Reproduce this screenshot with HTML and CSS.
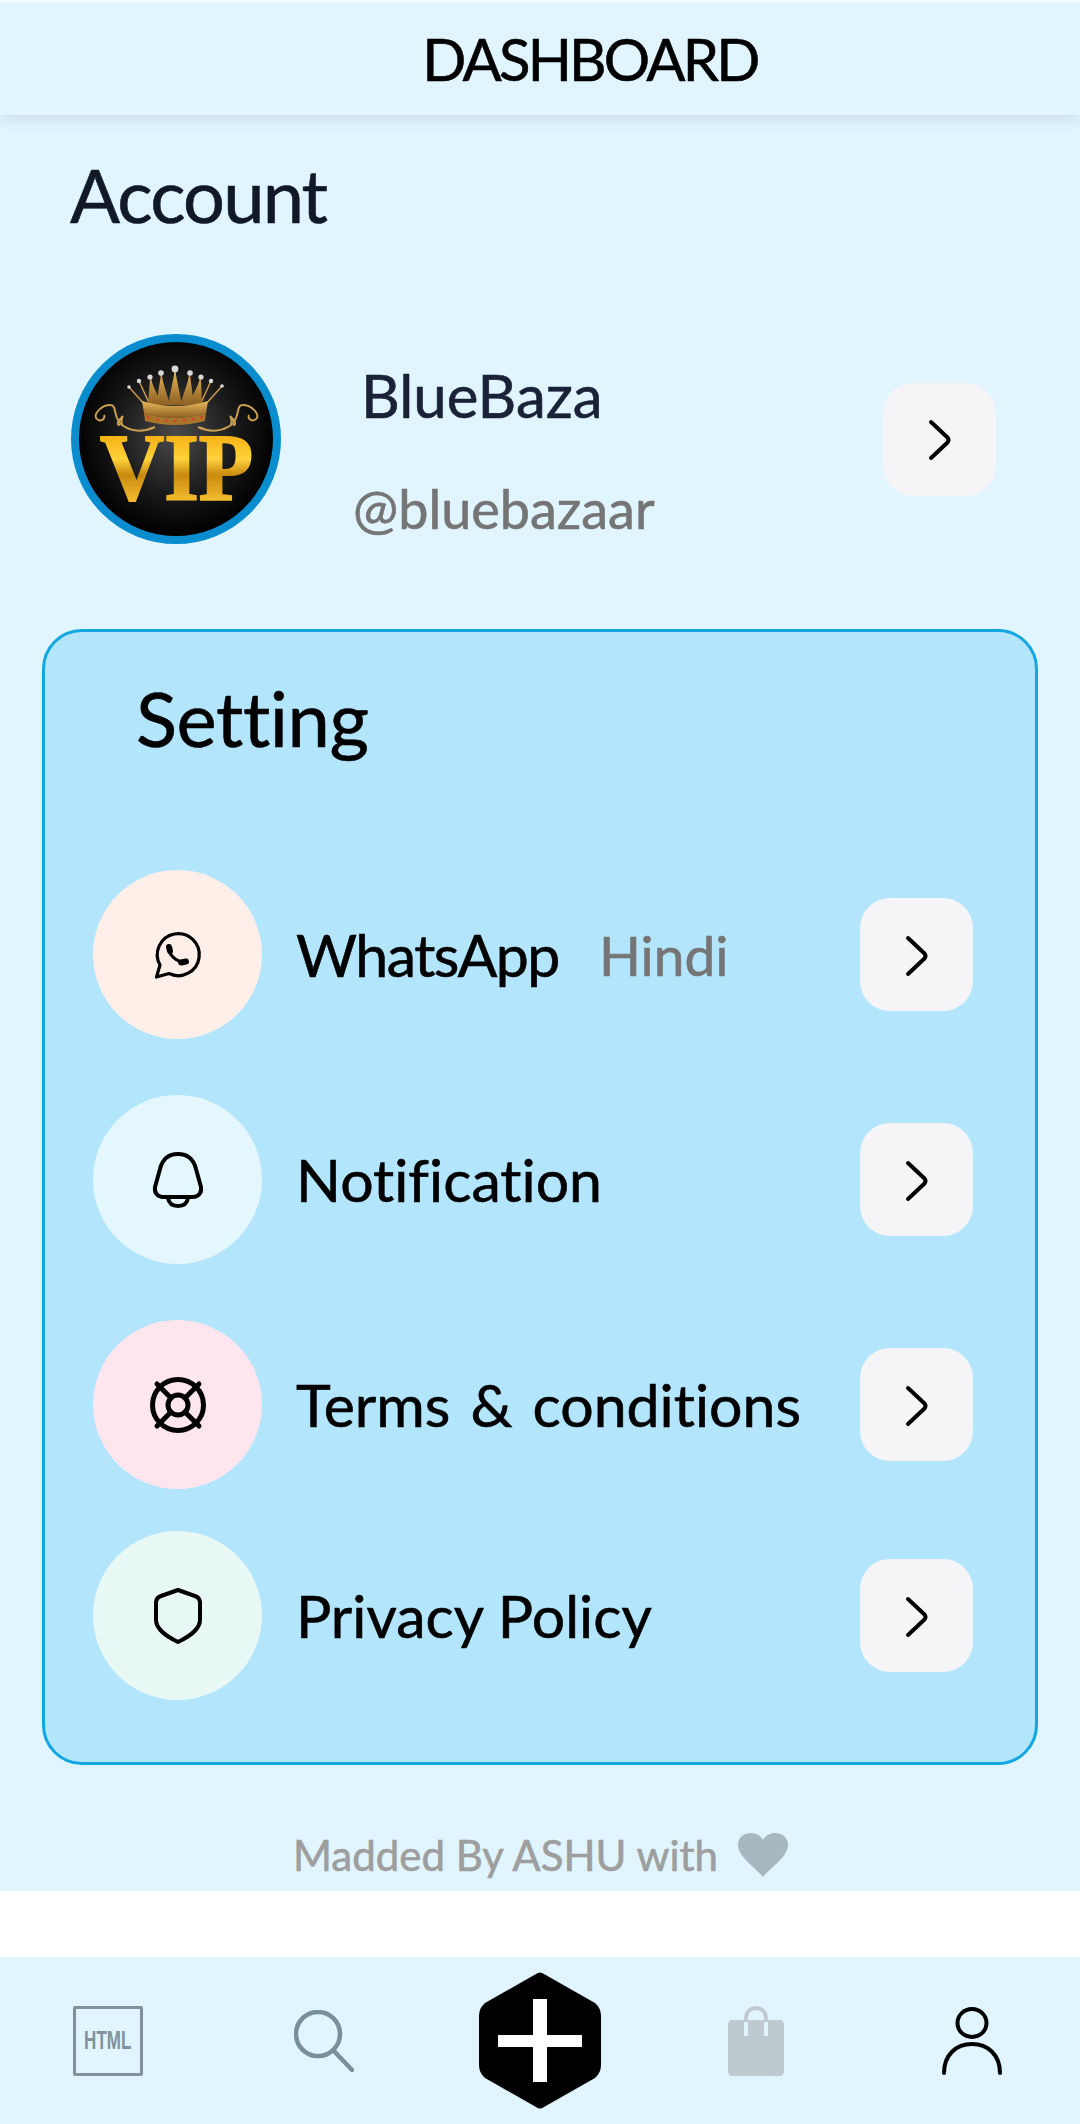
FILE: index.html
```html
<!DOCTYPE html>
<html lang="en">
<head>
    <meta charset="UTF-8">
    <meta name="viewport" content="width=device-width, initial-scale=1.0">
    <title>Dashboard</title>
    <link rel="stylesheet" href="styles.css">
</head>
<body>
    <header class="topbar">
        <h1>DASHBOARD</h1>
    </header>

    <main class="content">
        <h2 class="account-title">Account</h2>

        <section class="profile">
            <svg class="avatar" viewBox="0 0 212 212" role="img" aria-label="VIP">
                <defs>
                    <radialGradient id="avatarBg" cx="50%" cy="48%" r="50%">
                        <stop offset="0" stop-color="#4a4a4a"/>
                        <stop offset="0.65" stop-color="#161616"/>
                        <stop offset="1" stop-color="#000"/>
                    </radialGradient>
                    <linearGradient id="gold" gradientUnits="userSpaceOnUse" x1="0" y1="104" x2="0" y2="167">
                        <stop offset="0" stop-color="#f7b316"/>
                        <stop offset="0.35" stop-color="#ffd23c"/>
                        <stop offset="0.6" stop-color="#c98a10"/>
                        <stop offset="1" stop-color="#f3bb2c"/>
                    </linearGradient>
                    <linearGradient id="crown" x1="0" y1="0" x2="0" y2="1">
                        <stop offset="0" stop-color="#e9b85a"/>
                        <stop offset="1" stop-color="#8d5f22"/>
                    </linearGradient>
                </defs>
                <circle cx="106" cy="106" r="101" fill="url(#avatarBg)" stroke="#0a8dcf" stroke-width="8"/>
                <g class="crown-spikes">
                    <path d="M75 72 59 54M80 72 69 48M87 72 80 44M95 72 91 40M105 72V36M115 72 120 40M123 72 131 44M130 72 141 48M135 72 152 53"/>
                </g>
                <path d="M105 37 98 72H112ZM91 42 86 72H100ZM120 42 110 72H124ZM80 46 78 72H92ZM131 46 118 72H132Z" fill="url(#crown)"/>
                <g fill="#d9d9d9">
                    <circle cx="59" cy="54" r="1.8"/><circle cx="69" cy="48" r="2.2"/><circle cx="80" cy="44" r="2.6"/>
                    <circle cx="91" cy="40" r="2.8"/><circle cx="105" cy="36" r="3.4"/><circle cx="120" cy="40" r="2.8"/>
                    <circle cx="131" cy="44" r="2.6"/><circle cx="141" cy="48" r="2.2"/><circle cx="152" cy="53" r="1.8"/>
                </g>
                <path d="M72 68Q105 78 138 68L136 80Q105 90 74 80Z" fill="url(#crown)"/>
                <path d="M74 80Q105 90 136 80L135 88Q105 96 75 88Z" fill="#a8752c"/>
                <path d="M77 84Q105 92 133 84" fill="none" stroke="#e23a2e" stroke-width="2" stroke-dasharray="3 6"/>
                <g class="scroll">
                    <path d="M85 94C72 100 60 98 52 92 42 84 48 72 40 72 32 72 24 80 26 85 30 90 36 86 34 82"/>
                    <path d="M52 92C50 86 54 82 52 84 48 88 46 92 50 92"/>
                    <path d="M128 94C141 100 153 98 161 92 171 84 165 72 173 72 181 72 189 80 187 85 183 90 177 86 179 82"/>
                    <path d="M161 92C163 86 159 82 161 84 165 88 167 92 163 92"/>
                </g>
                <text class="vip" x="30" y="167" textLength="153" lengthAdjust="spacingAndGlyphs" fill="url(#gold)" stroke="url(#gold)">VIP</text>
            </svg>
            <div class="profile-info">
                <div class="profile-name">BlueBaza</div>
                <div class="profile-handle">@bluebazaar</div>
            </div>
            <div class="arrow-btn">
                <svg viewBox="0 0 48 48"><path d="M15 7 31.5 22.5Q33.5 25 31.5 27.5L15 43"/></svg>
            </div>
        </section>

        <section class="settings">
            <h2 class="settings-title">Setting</h2>

            <div class="row">
                <div class="row-icon bg-peach">
                    <svg class="icon-whatsapp" viewBox="-5 -4 56 56">
                        <path d="M1.5 46 5 34A21 21 0 1 1 14 42.5Z"/>
                        <path d="M14 17C14 24 21 31 30 31"/>
                        <path class="thick" d="M14 16 15 20M26 31.5 31 30.5"/>
                    </svg>
                </div>
                <span class="row-label label-tight">WhatsApp</span>
                <span class="row-note">Hindi</span>
                <div class="arrow-btn">
                    <svg viewBox="0 0 48 48"><path d="M15 7 31.5 22.5Q33.5 25 31.5 27.5L15 43"/></svg>
                </div>
            </div>

            <div class="row">
                <div class="row-icon bg-sky">
                    <svg viewBox="-2 0 56 56">
                        <path d="M26 2C15 2 10 9 8 17L3 35C2 41 6 45 11 45H41C46 45 50 41 49 35L44 17C42 9 37 2 26 2Z"/>
                        <path d="M16 46C17 52 21 54 26 54S35 52 36 46"/>
                    </svg>
                </div>
                <span class="row-label">Notification</span>
                <div class="arrow-btn">
                    <svg viewBox="0 0 48 48"><path d="M15 7 31.5 22.5Q33.5 25 31.5 27.5L15 43"/></svg>
                </div>
            </div>

            <div class="row">
                <div class="row-icon bg-pink">
                    <svg class="icon-terms" viewBox="0 0 56 56">
                        <circle cx="28" cy="28" r="25.5"/>
                        <circle cx="28" cy="28" r="10"/>
                        <path d="M7 7 21 21M49 7 35 21M7 49 21 35M49 49 35 35"/>
                    </svg>
                </div>
                <span class="row-label label-wide">Terms &amp; conditions</span>
                <div class="arrow-btn">
                    <svg viewBox="0 0 48 48"><path d="M15 7 31.5 22.5Q33.5 25 31.5 27.5L15 43"/></svg>
                </div>
            </div>

            <div class="row row-last">
                <div class="row-icon bg-mint">
                    <svg viewBox="-4 0 56 56">
                        <path d="M24 2 7 8C4 9 2 11 2 15V32C2 42 14 49 24 54 34 49 46 42 46 32V15C46 11 44 9 41 8Z"/>
                    </svg>
                </div>
                <span class="row-label">Privacy Policy</span>
                <div class="arrow-btn">
                    <svg viewBox="0 0 48 48"><path d="M15 7 31.5 22.5Q33.5 25 31.5 27.5L15 43"/></svg>
                </div>
            </div>
        </section>

        <footer class="credit">
            <span>Madded By ASHU with</span>
            <svg viewBox="0 0 50 44"><path d="M25 44C18 35 0 24 0 12 0 4 6 0 13 0 18 0 22 2 25 7 28 2 32 0 37 0 44 0 50 4 50 12 50 24 32 35 25 44Z"/></svg>
        </footer>
    </main>

    <nav class="bottom-nav">
        <div class="nav-item">
            <div class="html-box"><span>HTML</span></div>
        </div>
        <div class="nav-item">
            <svg class="nav-search" viewBox="0 0 60 62"><circle cx="24" cy="24" r="22"/><path d="M40 41 58 60"/></svg>
        </div>
        <div class="nav-item">
            <svg class="nav-plus" viewBox="0 0 122 137">
                <path d="M57 2Q61-1 65 2L116 31Q122 36 122 44V93Q122 101 116 106L65 135Q61 138 57 135L6 106Q0 101 0 93V44Q0 36 6 31Z"/>
                <path class="plus" d="M54 27H68V63H103V75H68V110H54V75H19V63H54Z"/>
            </svg>
        </div>
        <div class="nav-item">
            <svg class="nav-bag" viewBox="0 0 56 70">
                <path class="bag-handle" d="M18 16V13C18 6 22 2 28 2S38 6 38 13V16"/>
                <path d="M5 14H51Q56 14 56 19V65Q56 70 51 70H5Q0 70 0 65V19Q0 14 5 14Z"/>
                <path class="bag-slot" d="M18 16V30M38 16V30"/>
            </svg>
        </div>
        <div class="nav-item">
            <svg class="nav-user" viewBox="0 0 60 68">
                <ellipse cx="30" cy="16" rx="14.5" ry="14"/>
                <path d="M2 66C2 48 14 37 30 37S58 48 58 66"/>
            </svg>
        </div>
    </nav>
</body>
</html>
```

FILE: styles.css
```css
* {
    box-sizing: border-box;
}
body {
    margin: 0;
    height: 2124px;
    display: flex;
    flex-direction: column;
    background-color: white;
    font-family: "Lato", "Noto Sans", sans-serif;
    font-variant-ligatures: none;
    -webkit-text-stroke: 0.6px;
    color: #000;
    overflow: hidden;
}
.topbar {
    height: 115px;
    flex: none;
    position: relative;
    z-index: 1;
    display: flex;
    justify-content: center;
    align-items: center;
    background-color: #e0f5ff;
    border-top: 2px solid #eefaff;
    box-shadow: 0 5px 14px rgba(0, 0, 0, 0.09);
}
.topbar h1 {
    margin: 0 0 0 100px;
    font-size: 58px;
    line-height: 1;
    font-weight: 400;
    letter-spacing: -2.8px;
}
.content {
    height: 1776px;
    flex: none;
    background-color: #e0f5ff;
    padding: 0 42px;
}
.account-title {
    margin: 40px 0 0 28px;
    font-size: 74px;
    line-height: 80px;
    font-weight: 400;
    letter-spacing: -1.8px;
    color: #111827;
}
.profile {
    margin: 98px 42px 0 28px;
    height: 212px;
    display: flex;
    align-items: center;
}
.avatar {
    width: 212px;
    height: 212px;
    flex: none;
}
.crown-spikes path {
    fill: none;
    stroke: #c99a4a;
    stroke-width: 1.5;
}
.scroll path {
    fill: none;
    stroke: #c9a050;
    stroke-width: 2;
}
.vip {
    font-family: "Liberation Serif", serif;
    font-weight: 700;
    font-size: 96px;
    stroke-width: 2;
    -webkit-text-stroke: 0;
}
.profile-info {
    flex: 1;
    margin: 26px 0 0 71px;
}
.profile-name {
    margin-left: 8px;
    font-size: 60px;
    line-height: 70px;
    color: #1a2238;
}
.profile-handle {
    margin-top: 44px;
    font-size: 54px;
    line-height: 70px;
    color: #757575;
}
.arrow-btn {
    width: 113px;
    height: 113px;
    flex: none;
    display: flex;
    justify-content: center;
    align-items: center;
    background-color: #f5f5f7;
    border-radius: 30px;
}
.arrow-btn svg {
    width: 48px;
    height: 48px;
    fill: none;
    stroke: #000;
    stroke-width: 4;
    stroke-linecap: round;
    stroke-linejoin: round;
}
.settings {
    margin-top: 84px;
    height: 1136px;
    padding: 0 62px 0 48px;
    background-color: #b3e5fc;
    border: 3px solid #12a7e2;
    border-radius: 40px;
}
.settings-title {
    margin: 44px 0 0 43px;
    font-size: 76px;
    line-height: 84px;
    font-weight: 400;
    letter-spacing: -0.4px;
}
.row {
    height: 169px;
    margin-top: 56px;
    display: flex;
    align-items: center;
}
.settings-title + .row {
    margin-top: 110px;
}
.row-last {
    margin-top: 42px;
}
.row-icon {
    width: 169px;
    height: 169px;
    flex: none;
    display: flex;
    justify-content: center;
    align-items: center;
    border-radius: 50%;
}
.row-icon svg {
    height: 56px;
    width: 56px;
    fill: none;
    stroke: #000;
    stroke-width: 4;
    stroke-linecap: round;
    stroke-linejoin: round;
}
.row-icon .icon-whatsapp {
    stroke-width: 3.2;
}
.row-icon .icon-terms {
    stroke-width: 5;
}
.row-icon .thick {
    stroke-width: 6;
}
.bg-peach { background-color: #ffefe8; }
.bg-sky { background-color: #e4f7ff; }
.bg-pink { background-color: #ffe6ee; }
.bg-mint { background-color: #e8f8f5; }
.row-label {
    margin-left: 34px;
    font-size: 59px;
    line-height: 70px;
}
.label-tight {
    letter-spacing: -1.5px;
}
.label-wide {
    word-spacing: 5px;
}
.row-note {
    margin-left: 40px;
    font-size: 55px;
    line-height: 70px;
    color: #757575;
}
.row .arrow-btn {
    margin-left: auto;
}
.credit {
    margin-top: 62px;
    margin-left: 251px;
    display: flex;
    align-items: center;
    gap: 20px;
    font-size: 42px;
    line-height: 56px;
    color: #9e9e9e;
}
.credit svg {
    width: 50px;
    height: 44px;
    fill: #a8b8c0;
}
.bottom-nav {
    margin-top: 66px;
    height: 167px;
    flex: none;
    display: grid;
    grid-template-columns: repeat(5, 1fr);
    background-color: #e0f5ff;
}
.nav-item {
    display: flex;
    justify-content: center;
    align-items: center;
}
.html-box {
    width: 70px;
    height: 70px;
    display: flex;
    justify-content: center;
    align-items: center;
    border: 3px solid #7f929e;
    border-radius: 2px;
    font-family: "Liberation Sans", sans-serif;
    font-size: 25px;
    font-weight: 700;
    color: #7f929e;
    -webkit-text-stroke: 0;
}
.html-box span {
    transform: scaleX(0.68);
}
.nav-search {
    width: 60px;
    height: 62px;
    fill: none;
    stroke: #78909c;
    stroke-width: 4.5;
    stroke-linecap: round;
}
.nav-plus {
    width: 122px;
    height: 137px;
    fill: #000;
}
.nav-plus .plus {
    fill: #fff;
}
.nav-bag {
    width: 56px;
    height: 70px;
    fill: #bfc9d0;
}
.bag-handle {
    fill: none;
    stroke: #bfc9d0;
    stroke-width: 4;
}
.bag-slot {
    fill: none;
    stroke: #e0f5ff;
    stroke-width: 4;
}
.nav-user {
    width: 60px;
    height: 68px;
    fill: none;
    stroke: #000;
    stroke-width: 4;
    stroke-linecap: round;
}
```
